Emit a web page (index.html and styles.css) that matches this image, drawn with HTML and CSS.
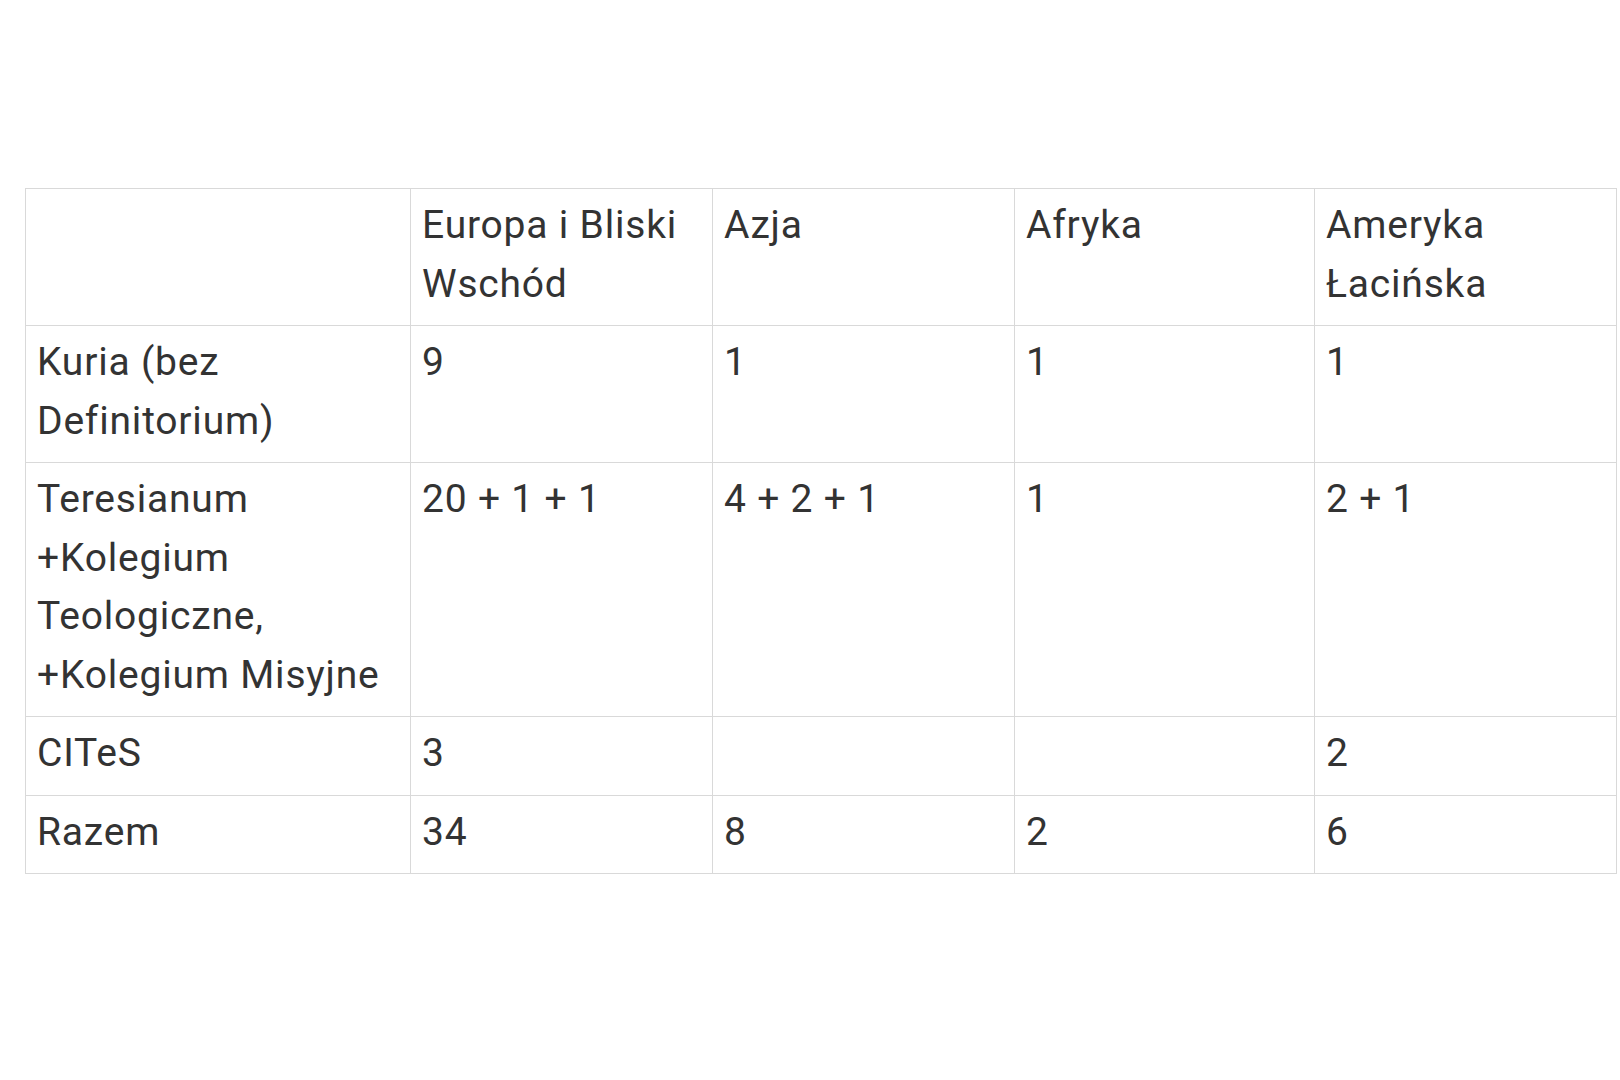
FILE: index.html
```html
<!DOCTYPE html>
<html lang="pl">
<head>
<meta charset="utf-8">
<title>Tabela</title>
<link rel="stylesheet" href="styles.css">
</head>
<body>
<main class="page">
  <table class="grid">
    <colgroup>
      <col class="c-label">
      <col class="c-a">
      <col class="c-b">
      <col class="c-c">
      <col class="c-d">
    </colgroup>
    <tr>
      <td></td>
      <td>Europa i Bliski Wschód</td>
      <td>Azja</td>
      <td>Afryka</td>
      <td>Ameryka Łacińska</td>
    </tr>
    <tr>
      <td>Kuria (bez Definitorium)</td>
      <td>9</td>
      <td>1</td>
      <td>1</td>
      <td>1</td>
    </tr>
    <tr>
      <td>Teresianum +Kolegium Teologiczne, +Kolegium Misyjne</td>
      <td>20 + 1 + 1</td>
      <td>4 + 2 + 1</td>
      <td>1</td>
      <td>2 + 1</td>
    </tr>
    <tr>
      <td>CITeS</td>
      <td>3</td>
      <td></td>
      <td></td>
      <td>2</td>
    </tr>
    <tr>
      <td>Razem</td>
      <td>34</td>
      <td>8</td>
      <td>2</td>
      <td>6</td>
    </tr>
  </table>
</main>
</body>
</html>
```

FILE: styles.css
```css
html, body {
  margin: 0;
  padding: 0;
  background: #ffffff;
}

.page {
  padding: 188px 4px 0 25px;
}

.grid {
  border-collapse: collapse;
  table-layout: fixed;
  width: 1591px;
  font-family: Roboto, "Liberation Sans", sans-serif;
  font-size: 39px;
  letter-spacing: 0.8px;
  line-height: 58.5px;
  color: #333333;
}

.c-label { width: 385px; }
.c-a { width: 302px; }
.c-b { width: 302px; }
.c-c { width: 300px; }
.c-d { width: 302px; }

.grid td {
  border: 1.5px solid #d9d9d9;
  padding: 7px 11px 12px 11px;
  vertical-align: top;
  text-align: left;
}
```
